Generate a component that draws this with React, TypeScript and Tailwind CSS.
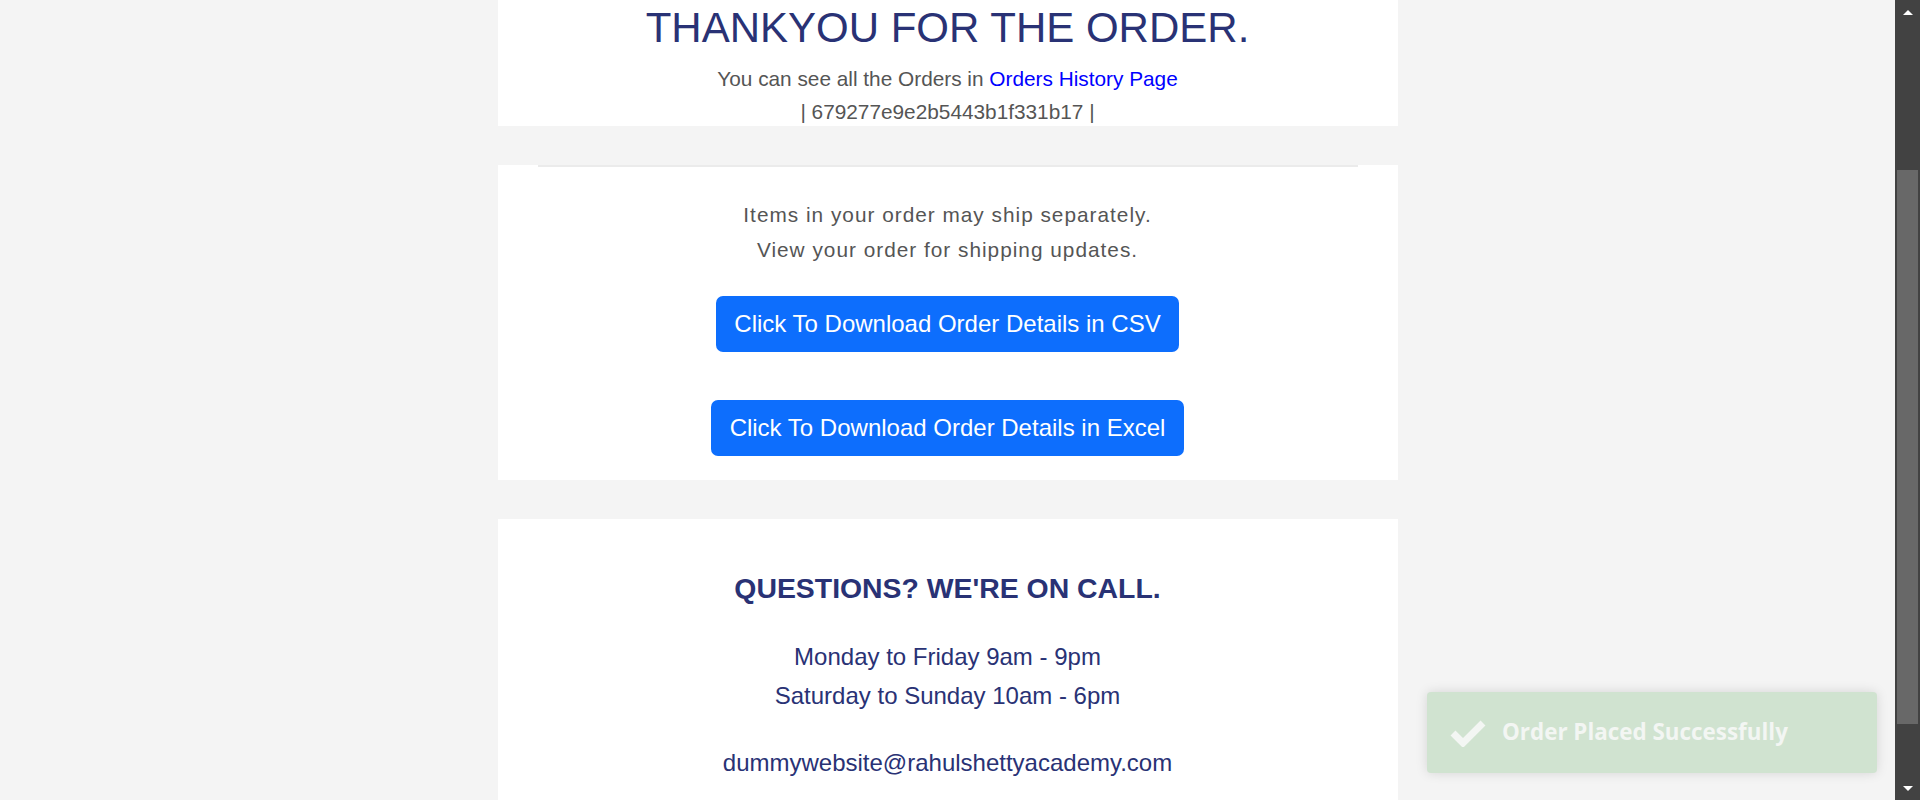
const navy = "text-[#293275]";

function Scrollbar() {
  return (
    <div className="w-[25px] h-[800px] shrink-0 bg-[#424242] flex flex-col items-center">
      <div className="h-[24px] flex items-center justify-center">
        <div className="w-0 h-0 border-x-[5px] border-x-transparent border-b-[5px] border-b-white" />
      </div>
      <div className="mt-[146px] w-[21px] h-[554px] bg-[#686868]" />
      <div className="flex-1" />
      <div className="h-[24px] flex items-center justify-center">
        <div className="w-0 h-0 border-x-[5px] border-x-transparent border-t-[5px] border-t-white" />
      </div>
    </div>
  );
}

function Toast() {
  return (
    <div className="absolute left-[1427px] top-[692px] w-[450px] h-[81px] rounded-[4px] bg-[#d0e3d0] shadow-[0_0_12px_rgba(0,0,0,0.13)] flex items-center pl-[22px] text-[#f3f6f3]">
      <svg width="38" height="28" viewBox="0 0 38 28" className="shrink-0">
        <polyline points="4,14 14,24 34,4" fill="none" stroke="#f3f6f3" strokeWidth="7" strokeLinejoin="miter" />
      </svg>
      <span className="ml-[15px] text-[22.4px] font-bold font-['Open_Sans',sans-serif] leading-none">
        Order Placed Successfully
      </span>
    </div>
  );
}

export default function App() {
  return (
    <div className="relative w-[1920px] h-[800px] overflow-hidden flex bg-[#f4f4f4] font-['Liberation_Sans',Arial,sans-serif]">
      <div className="flex-1 flex flex-col items-center">
        <div className="w-[900px] flex flex-col">
          {/* header block */}
          <div className="bg-white h-[126px] flex flex-col items-center overflow-hidden">
            <h1 className={`pt-[3px] text-[42px] leading-[50px] ${navy}`}>THANKYOU FOR THE ORDER.</h1>
            <p className="mt-[9px] text-[20.8px] leading-[34px] text-[#555]">
              You can see all the Orders in <a className="text-[#0000ff]">Orders History Page</a>
            </p>
            <p className="text-[20.8px] leading-[31px] text-[#555]">| 679277e9e2b5443b1f331b17 |</p>
          </div>

          {/* shipping block */}
          <div className="mt-[39px] bg-white h-[315px] flex flex-col items-center">
            <div className="self-stretch mx-[40px] h-[2px] bg-[#ebebeb]" />
            <p className="mt-[30px] text-[20.8px] leading-[35px] tracking-[1px] text-[#555]">
              Items in your order may ship separately.
            </p>
            <p className="text-[20.8px] leading-[35px] tracking-[1px] text-[#555]">
              View your order for shipping updates.
            </p>
            <button className="mt-[29px] h-[56px] px-[18px] rounded-[7px] bg-[#0d6efd] text-white text-[24px]">
              Click To Download Order Details in CSV
            </button>
            <button className="mt-[48px] h-[56px] px-[19px] rounded-[7px] bg-[#0d6efd] text-white text-[24px]">
              Click To Download Order Details in Excel
            </button>
          </div>

          {/* contact block */}
          <div className={`mt-[39px] bg-white h-[300px] flex flex-col items-center pt-[49px] ${navy}`}>
            <h2 className="text-[28.4px] leading-[40px] font-bold">QUESTIONS? WE'RE ON CALL.</h2>
            <p className="mt-[29px] text-[24px] leading-[39px]">Monday to Friday 9am - 9pm</p>
            <p className="text-[24px] leading-[39px]">Saturday to Sunday 10am - 6pm</p>
            <p className="mt-[28px] text-[24px] leading-[39px]">dummywebsite@rahulshettyacademy.com</p>
          </div>
        </div>
      </div>
      <Scrollbar />
      <Toast />
    </div>
  );
}
